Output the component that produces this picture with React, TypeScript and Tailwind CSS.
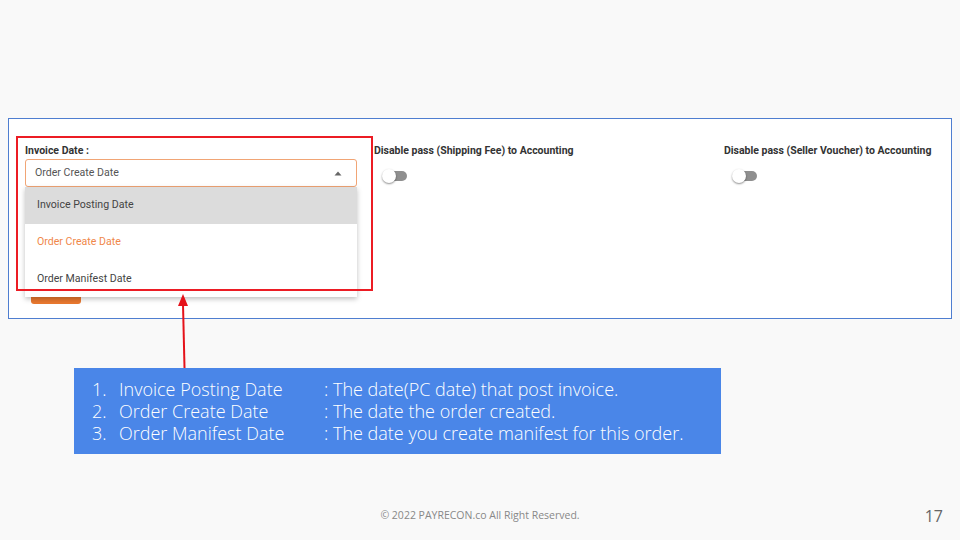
import React from "react";

const options = ["Invoice Posting Date", "Order Create Date", "Order Manifest Date"];

const notes = [
  ["Invoice Posting Date", ": The date(PC date) that post invoice."],
  ["Order Create Date", ": The date the order created."],
  ["Order Manifest Date", ": The date you create manifest for this order."],
];

const Toggle = () => (
  <div className="relative mt-[12px] ml-[8px] h-[14px] w-[26px]">
    <div className="absolute left-[4px] top-[2px] h-[10px] w-[21px] rounded-full bg-[#8f8f8f]" />
    <div className="absolute left-0 top-0 h-[14px] w-[14px] rounded-full bg-white shadow-[0_1px_2px_rgba(0,0,0,0.45)]" />
  </div>
);

const App = () => {
  return (
    <div className="relative h-[540px] w-[960px] overflow-hidden bg-[#f9f9f9] font-['Roboto',sans-serif]">
      <div className="h-[118px]" />
      {/* screenshot panel */}
      <div className="mx-[8px] flex h-[201px] w-[944px] border border-[#4f7ed0] bg-white pl-[16px] pt-[25px]">
        <div className="relative w-[349px]">
          <div className="text-[10.5px] font-bold leading-[13px] text-[#333]">Invoice Date :</div>
          <div className="mt-[2px] flex h-[28px] w-[332px] items-center justify-between rounded-[3px] border border-[#f1a575] px-[9px] text-[10.6px] text-[#555]">
            <span>Order Create Date</span>
            <svg width="8" height="5" viewBox="0 0 8 5" className="mr-[5px]">
              <path d="M4 0.5 L7.5 4.5 L0.5 4.5 Z" fill="#666" />
            </svg>
          </div>
          <div className="mt-[83px] ml-[6px] h-[34px] w-[50px] rounded-[3px] bg-[#e9782f]" />
          {/* dropdown menu */}
          <div className="absolute left-0 top-[43px] w-[332px] bg-white shadow-[0_2px_5px_rgba(0,0,0,0.25)]">
            {options.map((o, i) => (
              <div
                key={o}
                className={
                  "flex h-[36.7px] items-center px-[12px] text-[10.6px] " +
                  (i === 0 ? "bg-[#dcdcdc] text-[#444]" : i === 1 ? "text-[#f0874a]" : "text-[#444]")
                }
              >
                {o}
              </div>
            ))}
          </div>
        </div>
        <div className="w-[350px]">
          <div className="text-[10.5px] font-bold leading-[13px] text-[#333]">Disable pass (Shipping Fee) to Accounting</div>
          <Toggle />
        </div>
        <div>
          <div className="text-[10.5px] font-bold leading-[13px] text-[#333]">Disable pass (Seller Voucher) to Accounting</div>
          <Toggle />
        </div>
      </div>

      {/* note box */}
      <div className="mt-[49px] ml-[74px] flex h-[86px] w-[647px] flex-col justify-center bg-[#4a86e8] pl-[18px] font-['Open_Sans',sans-serif] text-[18px] font-light leading-[22px] text-white">
        {notes.map(([a, b], i) => (
          <div key={a} className="flex">
            <span className="w-[27px]">{i + 1}.</span>
            <span className="w-[205px]">{a}</span>
            <span>{b}</span>
          </div>
        ))}
      </div>

      {/* footer */}
      <div className="mt-[54px] flex items-center">
        <div className="flex-1 text-center font-['Open_Sans',sans-serif] text-[10.5px] text-[#888]">
          © 2022 PAYRECON.co All Right Reserved.
        </div>
      </div>
      <div className="absolute right-[17px] top-[504px] font-['Open_Sans',sans-serif] text-[16px] text-[#666]">17</div>

      {/* red annotation box */}
      <div className="pointer-events-none absolute left-[16px] top-[136px] h-[155px] w-[357px] border-2 border-[#ec1c24]" />
      {/* arrow */}
      <svg className="pointer-events-none absolute left-[170px] top-[290px]" width="30" height="80" viewBox="0 0 30 80">
        <line x1="13" y1="14" x2="14.5" y2="78" stroke="#e5121a" strokeWidth="2" />
        <path d="M13 4 L18 16 L8 16 Z" fill="#e5121a" />
      </svg>
    </div>
  );
};

export default App;
